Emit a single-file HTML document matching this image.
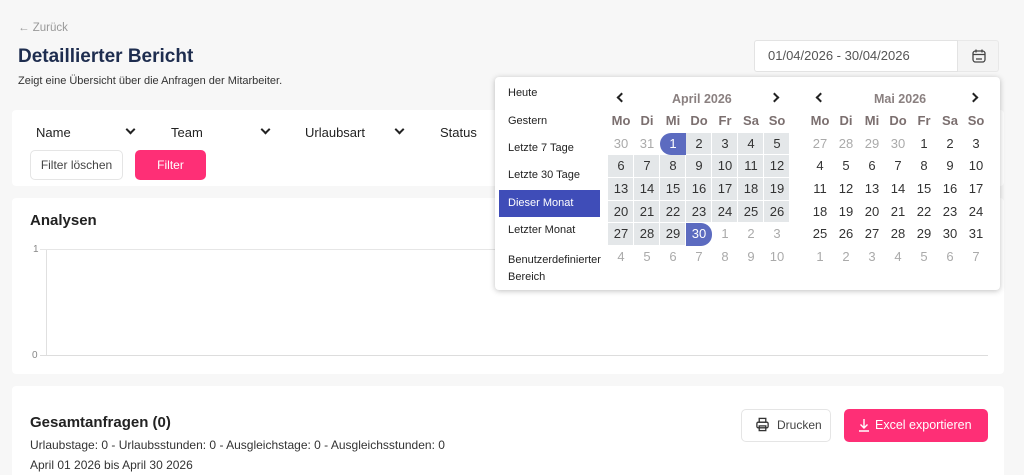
<!DOCTYPE html>
<html><head><meta charset="utf-8"><style>
*{box-sizing:border-box;margin:0;padding:0}
html{width:1024px;height:475px;overflow:hidden}
body{width:1024px;height:475px;background:#f7f7f7;font-family:"Liberation Sans",sans-serif;position:relative;overflow:hidden;color:#222}
.a{position:absolute}
.card{position:absolute;background:#fff;border-radius:4px}
.sel{position:absolute;font-size:13px;color:#222}
.chev{position:absolute;width:7px;height:7px;border-right:2px solid #222;border-bottom:2px solid #222;transform:rotate(45deg)}
.pop{position:absolute;left:495px;top:77px;width:505px;height:213px;background:#fff;border-radius:4px;box-shadow:0 1px 6px rgba(0,0,0,.25)}
.menu div{position:absolute;left:4px;width:101px;font-size:11px;color:#222;padding-left:9px}
.grid{position:absolute;display:grid;grid-template-columns:repeat(7,26px);grid-auto-rows:22.7px;font-size:13px;text-align:center}
.grid span{line-height:22.7px;color:#333}
.grid .o{color:#aaa}
.grid .r{background:#e4e7e9;box-shadow:inset -1px -1px 0 #fff}
.grid .h{color:#7b6f6f;font-weight:bold}
.grid .s{background:#5c6bc0;color:#fff;border-radius:11px 0 0 11px}
.grid .e{background:#5c6bc0;color:#fff;border-radius:0 11px 11px 0}
.mt{position:absolute;font-size:12.5px;font-weight:bold;color:#8a8080;top:92px}
.arr{position:absolute;top:94px;width:7px;height:7px;border-left:2px solid #222;border-bottom:2px solid #222}
</style></head><body>
<div class="a" style="left:18px;top:22px;font-size:11.5px;color:#999">← Zurück</div>
<div class="a" style="left:18px;top:46px;font-size:19px;font-weight:bold;color:#1e2d4f">Detaillierter Bericht</div>
<div class="a" style="left:18px;top:75px;font-size:11px;color:#333">Zeigt eine Übersicht über die Anfragen der Mitarbeiter.</div>

<div class="a" style="left:754px;top:40px;width:204px;height:32px;background:#fff;border:1px solid #e3e3e3;border-radius:3px 0 0 3px;font-size:13px;color:#555;padding:7px 0 0 13px">01/04/2026 - 30/04/2026</div>
<div class="a" style="left:958px;top:40px;width:41px;height:32px;background:#f4f4f4;border:1px solid #e8e8e8;border-left:none;border-radius:0 3px 3px 0"></div>
<svg class="a" style="left:971px;top:48px" width="16" height="16" viewBox="0 0 16 16" fill="none" stroke="#444" stroke-width="1.3"><rect x="2" y="3" width="12" height="11" rx="2.5"/><path d="M2 6.5h12M5 1.5v3M11 1.5v3M6 10v2M8 10v2M10 10v2"/></svg>

<div class="card" style="left:12px;top:110px;width:992px;height:76px"></div>
<div class="sel" style="left:36px;top:125px">Name</div><div class="chev" style="left:127px;top:126px"></div>
<div class="sel" style="left:171px;top:125px">Team</div><div class="chev" style="left:262px;top:126px"></div>
<div class="sel" style="left:305px;top:125px">Urlaubsart</div><div class="chev" style="left:396px;top:126px"></div>
<div class="sel" style="left:440px;top:125px">Status</div>
<div class="a" style="left:30px;top:150px;width:93px;height:30px;border:1px solid #e5e5e5;border-radius:5px;font-size:12px;color:#444;text-align:center;line-height:28px">Filter löschen</div>
<div class="a" style="left:135px;top:150px;width:71px;height:30px;background:#fe2f76;border-radius:5px;font-size:12px;color:#fff;text-align:center;line-height:30px">Filter</div>

<div class="card" style="left:12px;top:198px;width:992px;height:176px"></div>
<div class="a" style="left:30px;top:212px;font-size:15px;font-weight:bold;color:#222">Analysen</div>
<div class="a" style="left:33px;top:244px;font-size:10px;color:#888">1</div>
<div class="a" style="left:32px;top:350px;font-size:10px;color:#888">0</div>
<div class="a" style="left:40px;top:249px;width:948px;height:1px;background:#e6e6e6"></div>
<div class="a" style="left:46px;top:250px;width:1px;height:105px;background:#e0e0e0"></div>
<div class="a" style="left:40px;top:355px;width:948px;height:1px;background:#ddd"></div>

<div class="card" style="left:12px;top:386px;width:992px;height:89px;border-radius:4px 4px 0 0"></div>
<div class="a" style="left:30px;top:414px;font-size:15px;font-weight:bold;color:#222">Gesamtanfragen (0)</div>
<div class="a" style="left:30px;top:438px;font-size:12px;color:#333">Urlaubstage: 0 - Urlaubsstunden: 0 - Ausgleichstage: 0 - Ausgleichsstunden: 0</div>
<div class="a" style="left:30px;top:458px;font-size:12px;color:#333">April 01 2026 bis April 30 2026</div>
<div class="a" style="left:741px;top:409px;width:90px;height:33px;border:1px solid #e5e5e5;border-radius:5px;font-size:12px;color:#444;line-height:31px;padding-left:35px">Drucken</div>
<svg class="a" style="left:755px;top:417px" width="15" height="15" viewBox="0 0 16 16" fill="none" stroke="#333" stroke-width="1.4"><rect x="4.5" y="1.5" width="7" height="4"/><rect x="2" y="5.5" width="12" height="6" rx="1.5"/><rect x="4.5" y="9.5" width="7" height="5"/></svg>
<div class="a" style="left:844px;top:409px;width:144px;height:33px;background:#fe2f76;border-radius:5px;font-size:12.5px;color:#fff;line-height:33px;padding-left:31px">Excel exportieren</div>
<svg class="a" style="left:858px;top:418px" width="12" height="14" viewBox="0 0 12 14" fill="none" stroke="#fff" stroke-width="1.4"><path d="M6 1v9M2.5 6.5L6 10l3.5-3.5M1 13h10"/></svg>

<div class="pop">
<div class="menu">
<div style="top:10px">Heute</div>
<div style="top:38px">Gestern</div>
<div style="top:65px">Letzte 7 Tage</div>
<div style="top:92px">Letzte 30 Tage</div>
<div style="top:113px;height:27px;background:#3f4db8;color:#fff;line-height:27px">Dieser Monat</div>
<div style="top:147px">Letzter Monat</div>
<div style="top:175px;line-height:17px">Benutzerdefinierter<br>Bereich</div>
</div>
</div>
<div class="arr" style="left:618px;transform:rotate(45deg)"></div>
<div class="mt" style="left:672px">April 2026</div>
<div class="arr" style="left:771px;transform:rotate(-135deg)"></div>
<div class="arr" style="left:817px;transform:rotate(45deg)"></div>
<div class="mt" style="left:874px">Mai 2026</div>
<div class="arr" style="left:970px;transform:rotate(-135deg)"></div>

<div class="grid" style="left:608px;top:110px">
<span class="h">Mo</span><span class="h">Di</span><span class="h">Mi</span><span class="h">Do</span><span class="h">Fr</span><span class="h">Sa</span><span class="h">So</span>
<span class="o">30</span><span class="o">31</span><span class="s">1</span><span class="r">2</span><span class="r">3</span><span class="r">4</span><span class="r">5</span>
<span class="r">6</span><span class="r">7</span><span class="r">8</span><span class="r">9</span><span class="r">10</span><span class="r">11</span><span class="r">12</span>
<span class="r">13</span><span class="r">14</span><span class="r">15</span><span class="r">16</span><span class="r">17</span><span class="r">18</span><span class="r">19</span>
<span class="r">20</span><span class="r">21</span><span class="r">22</span><span class="r">23</span><span class="r">24</span><span class="r">25</span><span class="r">26</span>
<span class="r">27</span><span class="r">28</span><span class="r">29</span><span class="e">30</span><span class="o">1</span><span class="o">2</span><span class="o">3</span>
<span class="o">4</span><span class="o">5</span><span class="o">6</span><span class="o">7</span><span class="o">8</span><span class="o">9</span><span class="o">10</span>
</div>
<div class="grid" style="left:807px;top:110px">
<span class="h">Mo</span><span class="h">Di</span><span class="h">Mi</span><span class="h">Do</span><span class="h">Fr</span><span class="h">Sa</span><span class="h">So</span>
<span class="o">27</span><span class="o">28</span><span class="o">29</span><span class="o">30</span><span>1</span><span>2</span><span>3</span>
<span>4</span><span>5</span><span>6</span><span>7</span><span>8</span><span>9</span><span>10</span>
<span>11</span><span>12</span><span>13</span><span>14</span><span>15</span><span>16</span><span>17</span>
<span>18</span><span>19</span><span>20</span><span>21</span><span>22</span><span>23</span><span>24</span>
<span>25</span><span>26</span><span>27</span><span>28</span><span>29</span><span>30</span><span>31</span>
<span class="o">1</span><span class="o">2</span><span class="o">3</span><span class="o">4</span><span class="o">5</span><span class="o">6</span><span class="o">7</span>
</div>
</body></html>
